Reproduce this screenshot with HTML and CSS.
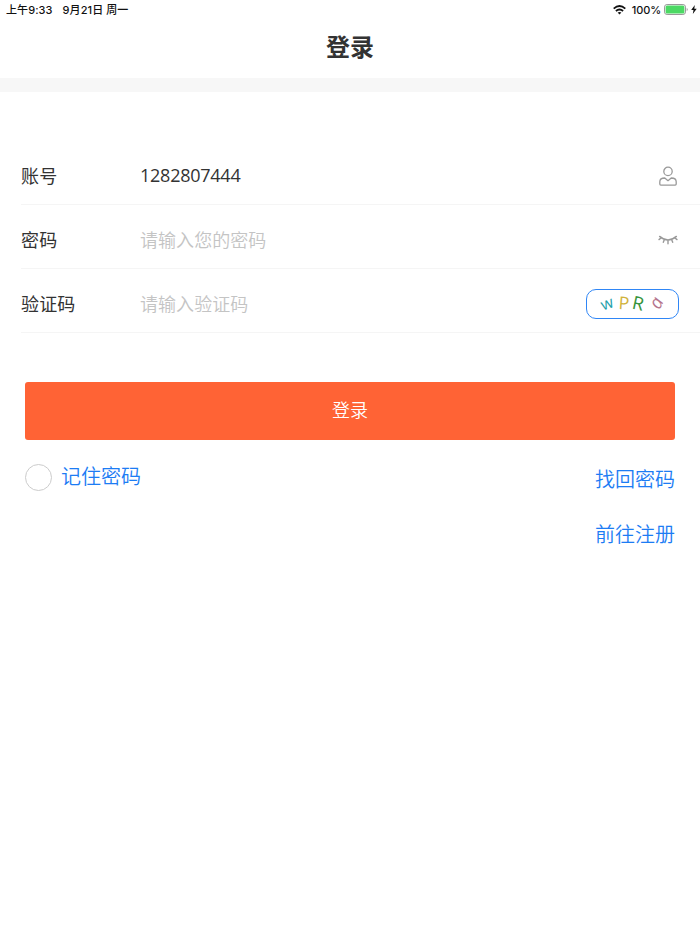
FILE: index.html
```html
<!DOCTYPE html>
<html lang="zh-CN">
<head>
<meta charset="utf-8">
<title>登录</title>
<link rel="stylesheet" href="styles.css">
</head>
<body>
<div class="status">
  <div class="status-left"><span>上午9:33</span><span>9月21日 周一</span></div>
  <div class="status-right">
    <svg class="wifi" width="13" height="10" viewBox="0 0 13 10" fill="none" stroke="#111" stroke-width="1.8"><path d="M.7 3.6Q6.5-1.5 12.3 3.6M2.9 6Q6.5 3 10.1 6"/><path d="M4.6 7.6Q6.5 6.2 8.4 7.6L6.5 9.5Z" fill="#111" stroke="none"/></svg>
    <span class="percent">100%</span>
    <svg class="battery" width="24" height="11" viewBox="0 0 24 11"><rect x=".5" y=".5" width="21" height="10" rx="2.6" fill="#fff" stroke="#999"/><rect x="1.6" y="1.6" width="18.8" height="7.8" rx="1.5" fill="#4cd964"/><path d="M22.7 4q1 .3 1 1.5t-1 1.5z" fill="#999"/></svg>
    <svg class="bolt" width="6" height="9" viewBox="0 0 6 9"><path d="M3.8 0 .2 5h2.3L1.8 9 5.7 3.8H3.3Z" fill="#111"/></svg>
  </div>
</div>
<h1 class="title">登录</h1>
<div class="band"></div>
<form class="form">
  <div class="row">
    <span class="label">账号</span><span class="value">1282807444</span>
    <svg class="icon user" width="18" height="20" viewBox="0 0 18 20" fill="none" stroke="#999" stroke-width="1.3" stroke-linejoin="round"><circle cx="9" cy="5.4" r="4.2"/><path d="M5.8 12 9 14.7l3.2-2.7c2.9 0 5 1.5 5 3.8v2.3q0 1-1 1H1.8q-1 0-1-1v-2.3c0-2.3 2.1-3.8 5-3.8Z"/></svg>
  </div>
  <div class="row">
    <span class="label">密码</span><span class="value hint">请输入您的密码</span>
    <svg class="icon" width="20" height="10" viewBox="0 0 20 10" fill="none" stroke="#999" stroke-width="1.4" stroke-linecap="round"><path d="M1.6 1.4Q10 8.6 18.4 1.4M3.2 2.8 1 4.6M6.4 4.4 5.3 7.3M10 5.1v3.6M13.6 4.4l1.1 2.9M16.8 2.8l2.2 1.8"/></svg>
  </div>
  <div class="row">
    <span class="label">验证码</span><span class="value hint">请输入验证码</span>
    <div class="captcha"><span class="c1">w</span><span class="c2">P</span><span class="c3">R</span><span class="c4">a</span></div>
  </div>
</form>
<div class="submit">登录</div>
<div class="options">
  <div class="remember"><span class="radio"></span><span class="remember-text">记住密码</span></div>
  <div class="links"><span>找回密码</span><span>前往注册</span></div>
</div>
</body>
</html>
```

FILE: styles.css
```css
* { box-sizing: border-box; }
body {
  margin: 0;
  background: #fff;
  color: #333;
  font-family: "Noto Sans CJK SC", sans-serif;
}
.status {
  height: 20px;
  display: flex;
  justify-content: space-between;
  padding: 0 3px 0 6px;
  font: 500 11px/20px Inter, "Noto Sans CJK SC", sans-serif;
  color: #111;
}
.status-left { display: flex; gap: 10px; white-space: nowrap; letter-spacing: .08px; }
.status-right { display: flex; align-items: center; height: 19px; }
.wifi { margin-right: 6px; }
.percent { margin-right: 3px; letter-spacing: -.1px; }
.battery { margin-right: 3px; }
.title {
  margin: 0;
  height: 58px;
  font-size: 24px;
  line-height: 51px;
  font-weight: 700;
  text-align: center;
  color: #333;
}
.band { height: 14px; background: #f7f7f7; }
.form { margin: 49px 0 0 21px; }
.row {
  height: 64px;
  display: flex;
  align-items: center;
  padding: 6px 21px 0 0;
  border-bottom: 1px solid #f5f5f5;
  font-size: 18px;
}
.label { width: 119px; padding-bottom: 2px; font-weight: 400; letter-spacing: .15px; }
.value {
  flex: 1;
  padding-bottom: 1px;
  font-family: "Open Sans", "Noto Sans CJK SC", sans-serif;
  letter-spacing: -.25px;
}
.hint {
  padding-bottom: 2px;
  color: #c4c4c4;
  font-family: "Noto Sans CJK SC", sans-serif;
  font-weight: 350;
  letter-spacing: .05px;
}
.icon { margin-right: 1px; }
.user { margin-right: 2px; }
.captcha {
  width: 93px;
  height: 30px;
  border: 1px solid #2f86f6;
  border-radius: 10px;
  display: flex;
  padding: 0 14px;
  font: 16px/26px "Open Sans", sans-serif;
}
.captcha span { display: block; }
.c1 { color: #239faa; transform: rotate(-20deg); }
.c2 { color: #d1b33d; margin-left: 6px; transform: rotate(4deg) scale(1.1); }
.c3 { color: #37943c; margin-left: 4px; transform: rotate(12deg) scale(1.15); }
.c4 { color: #b5758d; margin-left: 9px; font-style: italic; transform: translateY(-1px) rotate(-64deg) scale(1.15); }
.submit {
  margin: 49px 25px 0;
  height: 58px;
  border-radius: 3px;
  background: #ff6335;
  color: #fff;
  font-size: 18px;
  font-weight: 350;
  line-height: 55px;
  text-align: center;
}
.options {
  display: flex;
  justify-content: space-between;
  padding: 11px 25px 0;
  color: #1c7cf4;
  font-size: 20px;
  font-weight: 350;
}
.remember { display: flex; gap: 9px; padding-top: 13px; }
.radio { width: 27px; height: 27px; border: 1px solid #ccc; border-radius: 50%; }
.remember-text { line-height: 24px; }
.links { display: flex; flex-direction: column; line-height: 55px; }
```
